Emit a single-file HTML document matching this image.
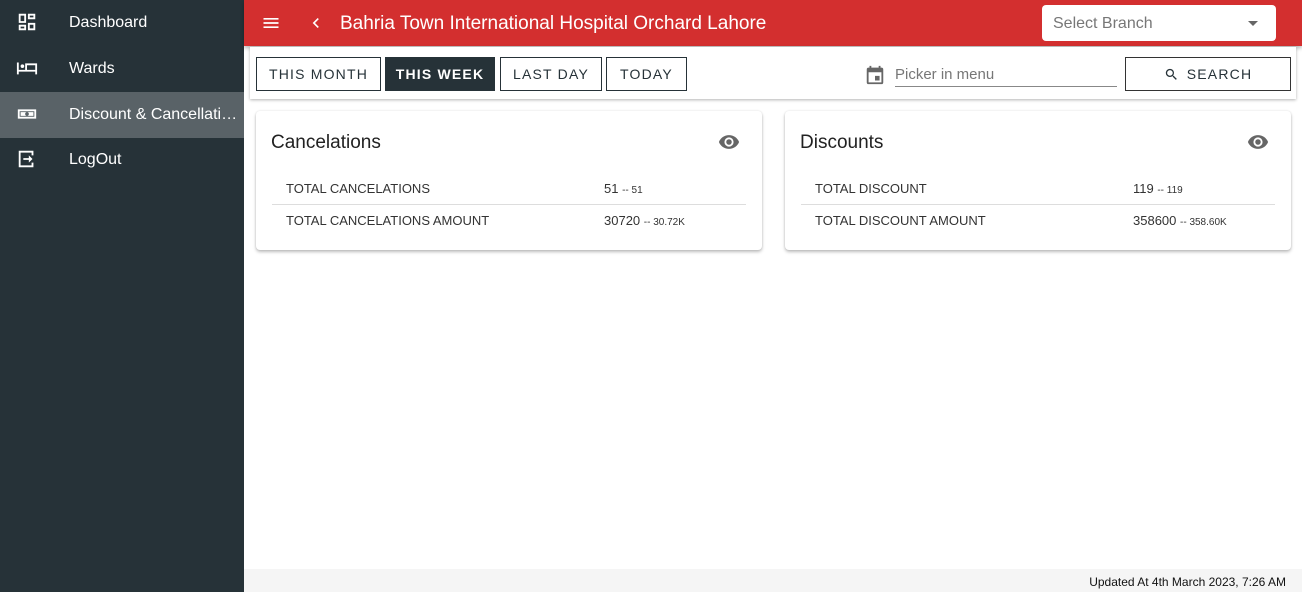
<!DOCTYPE html>
<html><head><style>
*{box-sizing:border-box;margin:0;padding:0}
body{width:1302px;height:592px;overflow:hidden;font-family:"Liberation Sans",Roboto,sans-serif;background:#fff;position:relative}
.side{position:absolute;left:0;top:0;width:244px;height:592px;background:#263238}
.item{position:absolute;left:0;width:244px;height:46px;color:#fff;font-size:16px;line-height:46px;padding-left:69px;white-space:nowrap;overflow:hidden}
.item.act{background:#596267}
.item svg{position:absolute;left:16px;top:11px}
.hdr{position:absolute;left:244px;top:0;width:1058px;height:46px;background:#d32f2f;box-shadow:0 2px 4px rgba(0,0,0,.3)}
.title{position:absolute;left:96px;top:1px;line-height:45px;color:#fff;font-size:19px}
.sel{position:absolute;left:798px;top:5px;width:234px;height:36px;background:#fff;border-radius:4px;color:#777;font-size:16px;line-height:38px;padding-left:11px}
.sel:after{content:"";position:absolute;right:18px;top:16px;border:5px solid transparent;border-top-color:#666;border-bottom:0}
.bar{position:absolute;left:250px;top:47px;width:1046px;height:52px;background:#fff;box-shadow:0 1px 3px rgba(0,0,0,.3)}
.btn{position:absolute;top:10px;height:34px;border:1px solid #263238;font-size:14px;letter-spacing:1.2px;line-height:33px;text-align:center;color:#263238;font-weight:500}
.btn.dk{background:#263238;color:#fff;font-weight:bold}
.card{position:absolute;top:111px;height:139px;background:#fff;border-radius:4px;box-shadow:0 2px 3px rgba(0,0,0,.25),0 0 2px rgba(0,0,0,.1)}
.card h2{position:absolute;left:15px;top:21px;font-size:19px;font-weight:normal;color:#222}
.card .eye{position:absolute;right:22px;top:20px}
.row{position:absolute;left:16px;right:16px;height:32px;font-size:13px;color:#333;line-height:32px}
.row span{position:absolute;left:14px}
.row b{position:absolute;left:332px;font-weight:normal}
.row small{font-size:10px}
.foot{position:absolute;left:244px;top:569px;width:1058px;height:23px;background:#f5f5f5;font-size:12px;text-align:right;padding-right:16px;line-height:26px;color:#111}
</style></head><body>
<div class="side">
<div class="item" style="top:0"><svg width="22" height="22" viewBox="0 0 24 24" fill="#fff"><path d="M3 3h8v10H3zm2 2v6h4V5zm8-2h8v6h-8zm2 2v2h4V5zM3 15h8v6H3zm2 2v2h4v-2zm8-4h8v8h-8zm2 2v4h4v-4z"/></svg>Dashboard</div>
<div class="item" style="top:46px"><svg width="22" height="22" viewBox="0 0 24 24" fill="#fff"><path d="M1 6h2v8h18V9h-9v5h-2V7h13v12h-2v-3H3v3H1zm6 2a2 2 0 110 4 2 2 0 010-4z"/></svg>Wards</div>
<div class="item act" style="top:92px"><svg width="22" height="22" viewBox="0 0 24 24" fill="#fff"><path d="M2 7h20v10H2zm2 2v6h16V9zm8 1a2 2 0 110 4 2 2 0 010-4z M5 10h14v4H5z" fill-rule="evenodd"/></svg>Discount &amp; Cancellati…</div>
<div class="item" style="top:137px"><svg width="22" height="22" viewBox="0 0 24 24" fill="#fff"><path d="M3 3h16v5h-2V5H5v14h12v-3h2v5H3zm11 5l4 4-4 4v-3H8v-2h6z"/></svg>LogOut</div>
</div>
<div class="hdr">
<svg style="position:absolute;left:16px;top:13px" width="22" height="20" viewBox="0 0 24 24" fill="#fff"><path d="M3 6h18v2H3zm0 5h18v2H3zm0 5h18v2H3z"/></svg>
<svg style="position:absolute;left:62px;top:13px" width="20" height="20" viewBox="0 0 24 24" fill="#fff"><path d="M15.4 7.4L14 6l-6 6 6 6 1.4-1.4-4.6-4.6z"/></svg>
<div class="title">Bahria Town International Hospital Orchard Lahore</div>
<div class="sel">Select Branch</div>
</div>
<div class="bar">
<div class="btn" style="left:6px;width:125px">THIS MONTH</div>
<div class="btn dk" style="left:135px;width:110px">THIS WEEK</div>
<div class="btn" style="left:250px;width:102px">LAST DAY</div>
<div class="btn" style="left:356px;width:81px">TODAY</div>
<svg style="position:absolute;left:614px;top:17px" width="22" height="22" viewBox="0 0 24 24" fill="#666"><path d="M19 4h-1V2h-2v2H8V2H6v2H5a2 2 0 00-2 2v14a2 2 0 002 2h14a2 2 0 002-2V6a2 2 0 00-2-2zm0 16H5V9h14zm-7-7h5v5h-5z"/></svg>
<div style="position:absolute;left:645px;top:19px;width:222px;height:21px;border-bottom:1px solid #888;color:#777;font-size:15px">Picker in menu</div>
<div class="btn" style="left:875px;width:166px;border-color:#333"><svg style="vertical-align:-3px;margin-right:8px" width="15" height="15" viewBox="0 0 24 24" fill="#263238"><path d="M15.5 14h-.8l-.3-.3A6.5 6.5 0 109.5 16a6.5 6.5 0 004.2-1.6l.3.3v.8l5 5 1.5-1.5zm-6 0a4.5 4.5 0 110-9 4.5 4.5 0 010 9z"/></svg>SEARCH</div>
</div>
<div class="card" style="left:256px;width:506px">
<h2>Cancelations</h2>
<svg class="eye" width="22" height="22" viewBox="0 0 24 24" fill="#666"><path d="M12 4.5C7 4.5 2.7 7.6 1 12c1.7 4.4 6 7.5 11 7.5s9.3-3.1 11-7.5c-1.7-4.4-6-7.5-11-7.5zM12 17a5 5 0 110-10 5 5 0 010 10zm0-8a3 3 0 100 6 3 3 0 000-6z"/></svg>
<div class="row" style="top:62px;border-bottom:1px solid #ddd"><span>TOTAL CANCELATIONS</span><b>51 <small>-- 51</small></b></div>
<div class="row" style="top:94px"><span>TOTAL CANCELATIONS AMOUNT</span><b>30720 <small>-- 30.72K</small></b></div>
</div>
<div class="card" style="left:785px;width:506px">
<h2>Discounts</h2>
<svg class="eye" width="22" height="22" viewBox="0 0 24 24" fill="#666"><path d="M12 4.5C7 4.5 2.7 7.6 1 12c1.7 4.4 6 7.5 11 7.5s9.3-3.1 11-7.5c-1.7-4.4-6-7.5-11-7.5zM12 17a5 5 0 110-10 5 5 0 010 10zm0-8a3 3 0 100 6 3 3 0 000-6z"/></svg>
<div class="row" style="top:62px;border-bottom:1px solid #ddd"><span>TOTAL DISCOUNT</span><b>119 <small>-- 119</small></b></div>
<div class="row" style="top:94px"><span>TOTAL DISCOUNT AMOUNT</span><b>358600 <small>-- 358.60K</small></b></div>
</div>
<div class="foot">Updated At 4th March 2023, 7:26 AM</div>
</body></html>
